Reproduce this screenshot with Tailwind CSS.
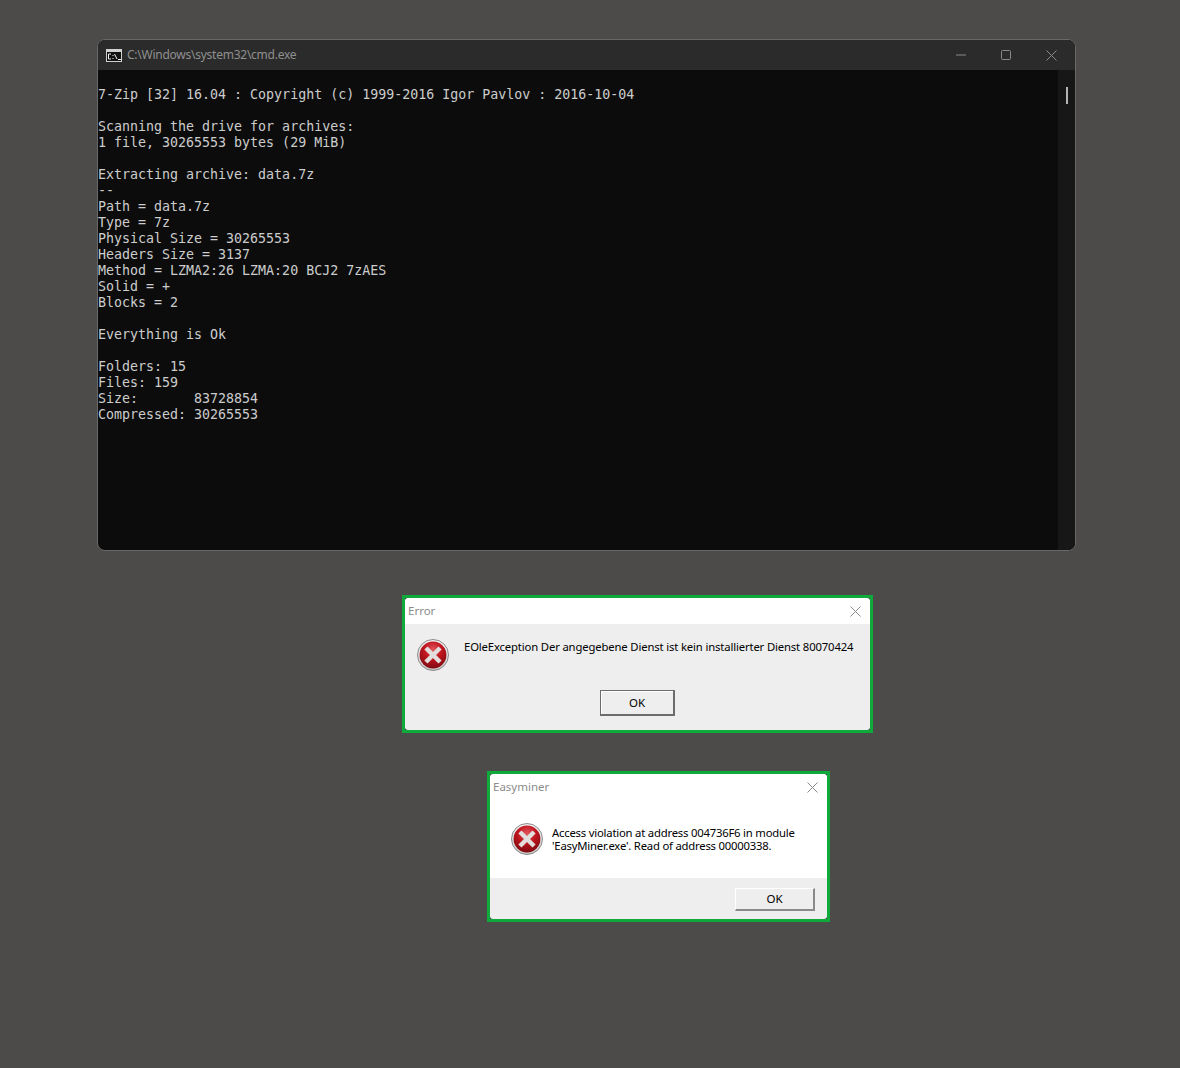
<!DOCTYPE html>
<html lang="en">
<head>
    <meta charset="UTF-8">
    <title>Errors</title>
    <script src="https://cdn.jsdelivr.net/npm/@tailwindcss/browser@4"></script>
</head>
<body class="bg-[#4c4b49] h-[1068px] overflow-hidden pt-[39px] font-['Noto_Sans',sans-serif]">
    <svg width="0" height="0" class="absolute">
        <defs>
            <radialGradient id="redFill" cx="50%" cy="30%" r="75%">
                <stop offset="0%" stop-color="#e2565e"/>
                <stop offset="45%" stop-color="#bf151e"/>
                <stop offset="100%" stop-color="#780a10"/>
            </radialGradient>
            <linearGradient id="ringFill" x1="0" y1="0" x2="0" y2="1">
                <stop offset="0%" stop-color="#f4f2f2"/>
                <stop offset="100%" stop-color="#c9c6c6"/>
            </linearGradient>
            <symbol id="errorIcon" viewBox="0 0 32 32">
                <circle cx="16" cy="16" r="15.5" fill="url(#ringFill)" stroke="#8c8c8c"/>
                <circle cx="16" cy="16" r="13.4" fill="url(#redFill)"/>
                <path d="M10.5 10.5 21.5 21.5M21.5 10.5 10.5 21.5" stroke="#e2dede" stroke-width="4.4" stroke-linecap="square"/>
            </symbol>
        </defs>
    </svg>

    <!-- console window -->
    <div class="ml-[97px] w-[979px] h-[512px] rounded-lg border border-[#686866] overflow-hidden flex flex-col bg-[#0c0c0c]">
        <div class="h-[30px] shrink-0 bg-[#2b2b2b] flex items-center pl-[8px]">
            <svg width="16" height="13" viewBox="0 0 16 13" class="shrink-0">
                <rect width="16" height="13" fill="#d0d0d0"/>
                <rect x="1" y="3" width="14" height="9" fill="#111"/>
                <path d="M5 5H2.5V10H5M7 6V7M7 9V10M8.5 5 11 10M12 10.5H15" stroke="#f2f2f2" fill="none"/>
            </svg>
            <span class="ml-[5px] text-[12px] text-[#8f8f8f] tracking-[-0.25px]">C:\Windows\system32\cmd.exe</span>
            <div class="ml-auto flex items-center pr-[18px] gap-[35px]">
                <svg width="10" height="10" viewBox="0 0 10 10"><path d="M0 5H10" stroke="#8a8a8a"/></svg>
                <svg width="10" height="10" viewBox="0 0 10 10"><rect x=".5" y=".5" width="9" height="9" rx="1" fill="none" stroke="#8a8a8a"/></svg>
                <svg width="11" height="11" viewBox="0 0 11 11"><path d="M.5.5 10.5 10.5M10.5.5 .5 10.5" stroke="#8a8a8a"/></svg>
            </div>
        </div>
        <div class="flex-1 flex min-h-0">
            <pre class="flex-1 pt-[17px] font-['DejaVu_Sans_Mono',monospace] text-[13.3px] leading-4 text-[#cccccc]">7-Zip [32] 16.04 : Copyright (c) 1999-2016 Igor Pavlov : 2016-10-04

Scanning the drive for archives:
1 file, 30265553 bytes (29 MiB)

Extracting archive: data.7z
--
Path = data.7z
Type = 7z
Physical Size = 30265553
Headers Size = 3137
Method = LZMA2:26 LZMA:20 BCJ2 7zAES
Solid = +
Blocks = 2

Everything is Ok

Folders: 15
Files: 159
Size:       83728854
Compressed: 30265553</pre>
            <div class="w-[17px] shrink-0 bg-[#171717] pt-[17px] pl-[8px]">
                <div class="w-[2px] h-[17px] bg-[#b4b4b4]"></div>
            </div>
        </div>
    </div>

    <!-- first dialog -->
    <div class="mt-[44px] ml-[402px] w-[471px] h-[138px] border-[3px] border-[#10aa3c] bg-[#333] flex flex-col">
        <div class="h-[26px] shrink-0 bg-white rounded-t-[3px] flex items-center justify-between pl-[3px] pr-[9px]">
            <span class="text-[11.5px] text-[#8c8c8c]">Error</span>
            <svg width="11" height="11" viewBox="0 0 11 11"><path d="M.5.5 10.5 10.5M10.5.5 .5 10.5" stroke="#8a8a8a"/></svg>
        </div>
        <div class="flex-1 bg-[#eeeeee] rounded-b-[3px] flex flex-col">
            <div class="flex pl-[12px] pt-[15px]">
                <svg width="32" height="32" class="shrink-0"><use href="#errorIcon"/></svg>
                <p class="ml-[15px] text-[11.3px] leading-[16px] text-black tracking-[-0.15px] whitespace-nowrap">EOleException Der angegebene Dienst ist kein installierter Dienst 80070424</p>
            </div>
            <div class="pl-[195px] pt-[19px]">
                <button class="block w-[75px] h-[26px] border border-r-2 border-b-2 border-[#6c6c6c] bg-[#eeeeee] shadow-[inset_1px_1px_0_#fff] text-[11.5px] text-black">OK</button>
            </div>
        </div>
    </div>

    <!-- second dialog -->
    <div class="mt-[38px] ml-[487px] w-[343px] h-[151px] border-[3px] border-[#10aa3c] bg-[#333] flex flex-col">
        <div class="h-[104px] shrink-0 bg-white rounded-t-[3px] flex flex-col">
            <div class="h-[26px] shrink-0 flex items-center justify-between pl-[3px] pr-[9px]">
                <span class="text-[11.5px] text-[#8c8c8c]">Easyminer</span>
                <svg width="11" height="11" viewBox="0 0 11 11"><path d="M.5.5 10.5 10.5M10.5.5 .5 10.5" stroke="#8a8a8a"/></svg>
            </div>
            <div class="flex pl-[21px] pt-[23px]">
                <svg width="32" height="32" class="shrink-0"><use href="#errorIcon"/></svg>
                <p class="ml-[9px] mt-[3px] text-[11.3px] leading-[13px] text-black tracking-[-0.21px] whitespace-nowrap">Access violation at address 004736F6 in module<br>'EasyMiner.exe'. Read of address 00000338.</p>
            </div>
        </div>
        <div class="flex-1 bg-[#eeeeee] rounded-b-[3px] pl-[245px] pt-[10px]">
            <button class="block w-[80px] h-[23px] border-t border-l border-white border-r-2 border-b-2 border-r-[#8a8a8a] border-b-[#8a8a8a] bg-[#eeeeee] text-[11.5px] text-black">OK</button>
        </div>
    </div>
</body>
</html>
